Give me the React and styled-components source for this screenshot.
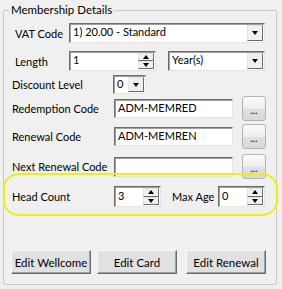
import React from 'react';
import styled, { createGlobalStyle } from 'styled-components';

const GlobalStyle = createGlobalStyle`
  body {
    margin: 0;
    background: #f0f0f0;
    font-family: Lato, "Open Sans", sans-serif;
    font-size: 11px;
    color: #000;
  }
`;

const Group = styled.fieldset`
  box-sizing: border-box;
  margin: 3px 0 0 3px;
  width: 274px;
  height: 282px;
  padding: 0;
  border: 1px solid #c9c9c9;
  border-radius: 2px;
  min-width: 0;
`;

const Legend = styled.legend`
  margin-left: 5px;
  padding: 0 2px;
  line-height: 14px;
  font-size: 11.5px;
`;

const Body = styled.div`
  display: flex;
  flex-direction: column;
`;

const Row = styled.div`
  display: flex;
  align-items: center;
  height: ${(p) => p.$h || 20}px;
  margin-top: ${(p) => p.$mt || 0}px;
  position: relative;
`;

const Label = styled.span`
  box-sizing: border-box;
  flex: none;
  width: ${(p) => p.$w}px;
  padding-left: ${(p) => p.$pl || 8}px;
  white-space: nowrap;
`;

const Field = styled.div`
  box-sizing: border-box;
  position: relative;
  display: flex;
  align-items: center;
  flex: none;
  width: ${(p) => p.$w}px;
  height: ${(p) => p.$h || 20}px;
  margin-left: ${(p) => p.$ml || 0}px;
  background: #fff;
  border: 1px solid;
  border-color: #6d6d6d #e3e3e3 #e3e3e3 #6d6d6d;
  box-shadow: inset 1px 1px 0 #a0a0a0;
  padding-left: 3px;
  white-space: nowrap;
  overflow: hidden;
`;

const Value = styled.span`
  flex: 1;
  line-height: 14px;
  margin-top: -2px;
`;

const DropBtn = styled.div`
  box-sizing: border-box;
  flex: none;
  width: 16px;
  height: calc(100% - 2px);
  margin-right: 1px;
  display: flex;
  align-items: center;
  justify-content: center;
  background: #f0f0f0;
  border: 1px solid;
  border-color: #e3e3e3 #696969 #696969 #e3e3e3;
`;

const Arrow = styled.span`
  width: 0;
  height: 0;
  border-left: 3.5px solid transparent;
  border-right: 3.5px solid transparent;
  border-top: ${(p) => (p.$up ? 'none' : '4px solid #000')};
  border-bottom: ${(p) => (p.$up ? '4px solid #000' : 'none')};
`;

const Spin = styled.div`
  flex: none;
  width: 16px;
  height: calc(100% - 2px);
  margin-right: 1px;
  display: flex;
  flex-direction: column;
`;

const SpinHalf = styled.div`
  box-sizing: border-box;
  flex: 1;
  display: flex;
  align-items: center;
  justify-content: center;
  background: #f0f0f0;
  border: 1px solid;
  border-color: #e3e3e3 #696969 #696969 #e3e3e3;
`;

const DotsBtn = styled.button`
  box-sizing: border-box;
  flex: none;
  width: 24px;
  height: 25px;
  margin-left: 9px;
  padding: 0 0 5px;
  border: 1px solid #b4b4b4;
  border-radius: 3px;
  background: linear-gradient(#fafafa, #eeeeee 50%, #e0e0e0 51%, #d8d8d8);
  color: #22227a;
  font-family: inherit;
  font-size: 10px;
  font-weight: bold;
  line-height: 1;
  display: flex;
  align-items: flex-end;
  justify-content: center;
`;

const Highlight = styled.div`
  position: relative;
  &::before {
    content: '';
    position: absolute;
    left: -1px;
    right: -2px;
    top: -6px;
    bottom: -9px;
    border: 2.5px solid #eeee10;
    border-radius: 16px / 15px;
    pointer-events: none;
  }
`;

const Footer = styled.div`
  display: flex;
  margin-top: ${(p) => p.$mt}px;
  padding-left: 7px;
`;

const EditBtn = styled.button`
  box-sizing: border-box;
  width: 80px;
  height: 24px;
  margin-right: ${(p) => p.$mr || 0}px;
  padding: 0;
  font-family: inherit;
  font-size: 11.5px;
  color: #000;
  background: #e1e1e1;
  border: 1px solid;
  border-color: #f8f8f8 #6b6b6b #6b6b6b #f8f8f8;
  box-shadow: inset -1px -1px 0 #a0a0a0;
`;

const Combo = ({ w, h, ml, children }) => (
  <Field $w={w} $h={h} $ml={ml}>
    <Value>{children}</Value>
    <DropBtn>
      <Arrow />
    </DropBtn>
  </Field>
);

const Spinner = ({ w, h, ml, children }) => (
  <Field $w={w} $h={h} $ml={ml}>
    <Value>{children}</Value>
    <Spin>
      <SpinHalf>
        <Arrow $up />
      </SpinHalf>
      <SpinHalf>
        <Arrow />
      </SpinHalf>
    </Spin>
  </Field>
);

const Text = ({ w, h, children }) => (
  <Field $w={w} $h={h}>
    <Value>{children}</Value>
  </Field>
);

export default function App() {
  return (
    <>
      <GlobalStyle />
      <Group>
        <Legend>Membership Details</Legend>
        <Body>
          <Row $mt={6}>
            <Label $w={65} $pl={11}>VAT Code</Label>
            <Combo w={196}>1) 20.00 - Standard</Combo>
          </Row>
          <Row $mt={8}>
            <Label $w={65} $pl={11}>Length</Label>
            <Spinner w={87}>1</Spinner>
            <Combo w={97} ml={12}>Year(s)</Combo>
          </Row>
          <Row $mt={4} $h={19}>
            <Label $w={109}>Discount Level</Label>
            <Combo w={33} h={19}>0</Combo>
          </Row>
          <Row $mt={2} $h={25}>
            <Label $w={110}>Redemption Code</Label>
            <Text w={119} h={19}>ADM-MEMRED</Text>
            <DotsBtn>...</DotsBtn>
          </Row>
          <Row $mt={3} $h={25}>
            <Label $w={110}>Renewal Code</Label>
            <Text w={119} h={19}>ADM-MEMREN</Text>
            <DotsBtn>...</DotsBtn>
          </Row>
          <Row $mt={5} $h={25}>
            <Label $w={110}>Next Renewal Code</Label>
            <Text w={119} h={20} />
            <DotsBtn>...</DotsBtn>
          </Row>
          <Highlight>
            <Row $mt={7} $h={21}>
              <Label $w={110}>Head Count</Label>
              <Spinner w={47} h={21}>3</Spinner>
              <Label $w={57} $pl={11}>Max Age</Label>
              <Spinner w={47} h={21}>0</Spinner>
            </Row>
          </Highlight>
          <Footer $mt={43}>
            <EditBtn $mr={6}>Edit Wellcome</EditBtn>
            <EditBtn $mr={9}>Edit Card</EditBtn>
            <EditBtn>Edit Renewal</EditBtn>
          </Footer>
        </Body>
      </Group>
    </>
  );
}
